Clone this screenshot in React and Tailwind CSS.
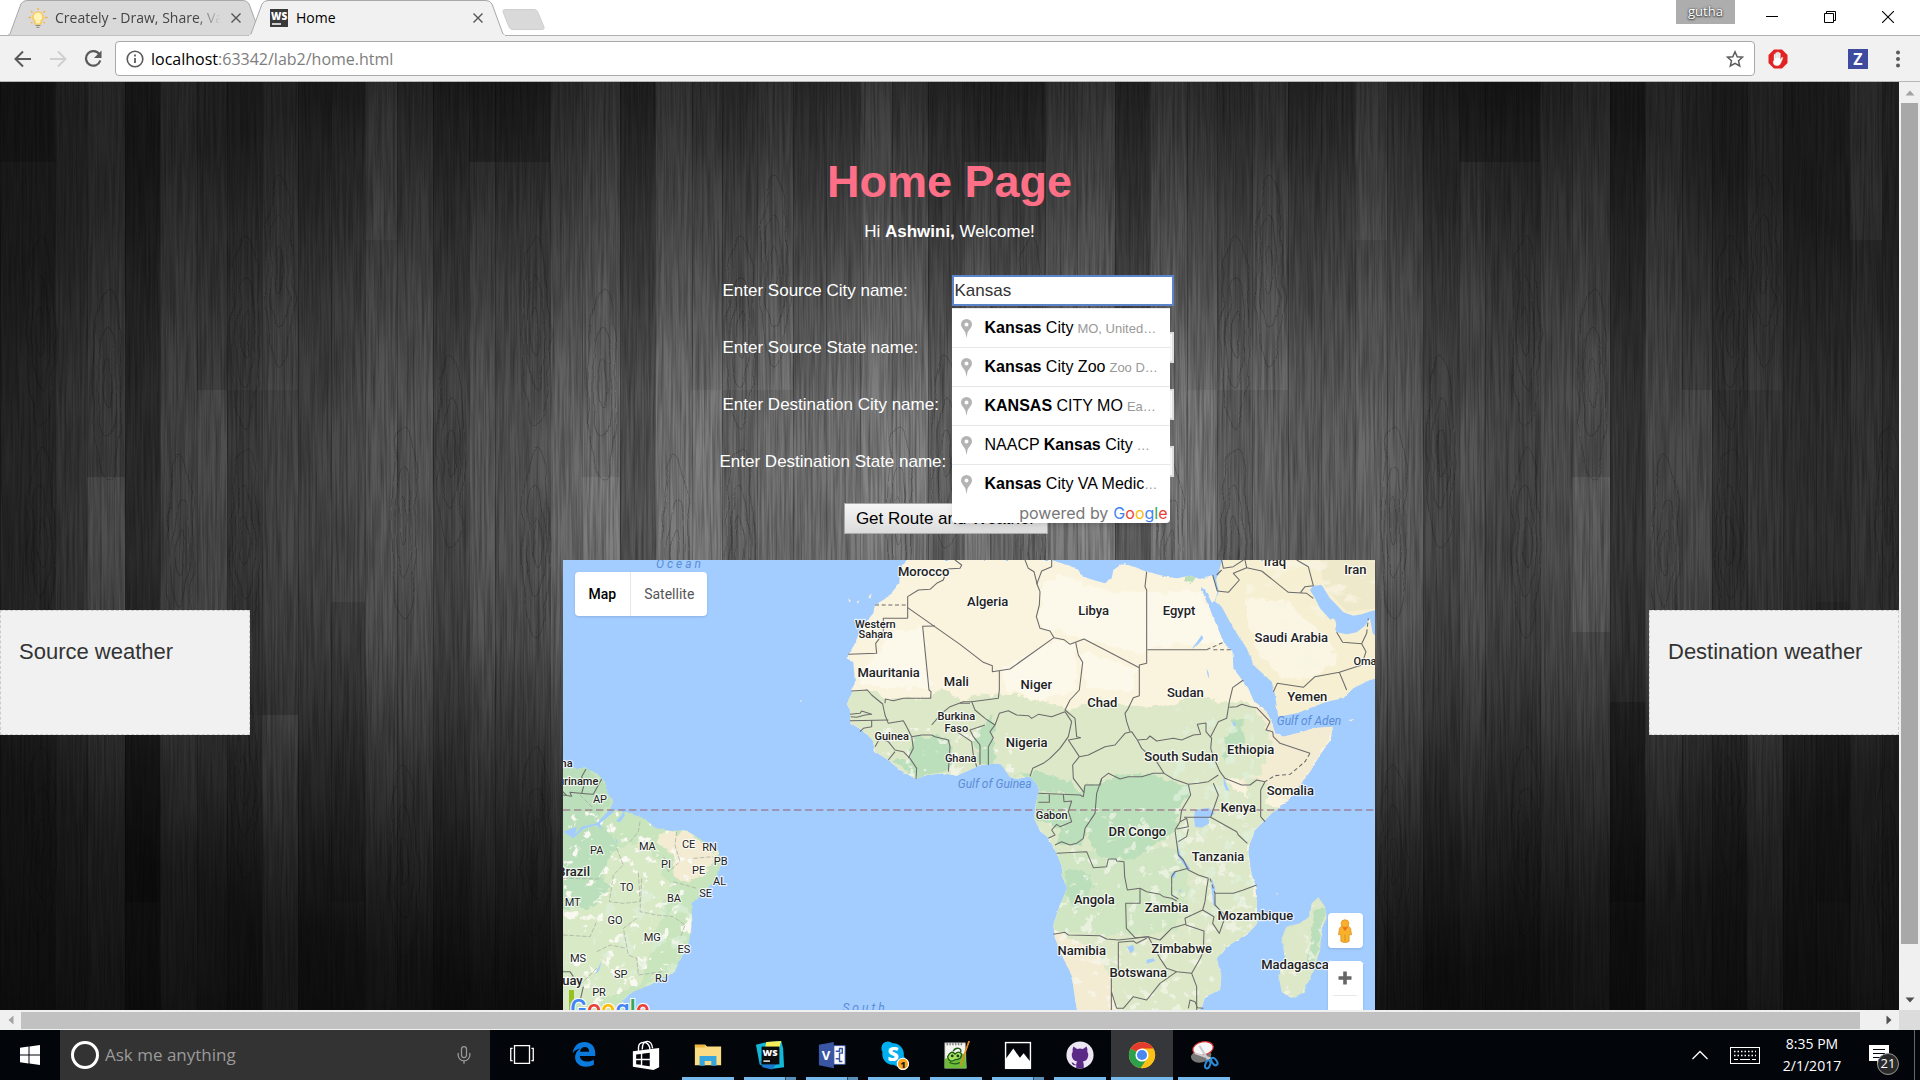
import React from "react";
import { Mic } from "lucide-react";

const ui = "font-['Open_Sans','Noto_Sans',sans-serif]";

/* ---------- wooden wall behind the page ---------- */

const planks = [
  [0, 55, "#000", 0.12], [55, 32, "#fff", 0.02], [87, 38, "#fff", 0.05], [125, 35, "#000", 0.22],
  [160, 37, "#fff", 0.05], [197, 30, "#fff", 0.02], [227, 35, "#000", 0.05], [262, 36, "#fff", 0.03],
  [298, 33, "#000", 0.08], [331, 34, "#000", 0.03], [365, 32, "#fff", 0.04], [397, 36, "#fff", 0.02],
  [433, 36, "#000", 0.18], [469, 26, "#000", 0.02],
];

const plankEnds = [
  [87, 395, 38, 155, "#fff", 0.08], [197, 308, 30, 325, "#fff", 0.05], [469, 0, 26, 80, "#000", 0.25],
  [0, 0, 55, 80, "#000", 0.2], [365, 0, 32, 158, "#fff", 0.04], [227, 308, 71, 325, "#000", 0.08],
  [262, 633, 36, 300, "#fff", 0.05], [125, 620, 35, 200, "#000", 0.2], [331, 520, 34, 300, "#000", 0.12],
];

const knots = [[41, 460], [41, 250], [245, 250], [245, 460], [404, 440], [180, 470], [280, 190], [450, 370], [107, 300], [245, 700], [41, 760], [404, 780]];

function WoodWall() {
  return (
    <svg className="absolute inset-0 h-full w-full" preserveAspectRatio="none" aria-hidden="true">
      <defs>
        <radialGradient id="glow" cx="50%" cy="47%" r="56%">
          <stop offset="0" stopColor="#888888" />
          <stop offset="0.25" stopColor="#7a7a7a" />
          <stop offset="0.5" stopColor="#5a5a5a" />
          <stop offset="0.75" stopColor="#3c3c3c" />
          <stop offset="1" stopColor="#222222" />
        </radialGradient>
        <linearGradient id="floor" x1="0" y1="0" x2="0" y2="1">
          <stop offset="0" stopColor="#000" stopOpacity="0.1" />
          <stop offset="0.35" stopColor="#000" stopOpacity="0" />
          <stop offset="0.6" stopColor="#000" stopOpacity="0.05" />
          <stop offset="1" stopColor="#000" stopOpacity="0.52" />
        </linearGradient>
        <filter id="grain" x="0" y="0" width="100%" height="100%">
          <feTurbulence type="fractalNoise" baseFrequency="0.45 0.012" numOctaves="3" seed="7" />
          <feColorMatrix values="0 0 0 0 0  0 0 0 0 0  0 0 0 0 0  1.7 0 0 0 -0.55" />
        </filter>
        <filter id="wavy" x="-20%" y="-5%" width="140%" height="110%">
          <feTurbulence type="fractalNoise" baseFrequency="0.03" numOctaves="2" seed="3" />
          <feDisplacementMap in="SourceGraphic" scale="12" />
        </filter>
        <pattern id="planks" width="495" height="930" patternUnits="userSpaceOnUse">
          {planks.map(([x, w, c, o]) => (
            <g key={x}>
              <rect x={x} width={w} height="930" fill={c} fillOpacity={o} />
              <rect x={x} width="1" height="930" fill="#000" fillOpacity="0.22" />
            </g>
          ))}
          {plankEnds.map(([x, y, w, h, c, o]) => (
            <rect key={`${x}-${y}`} x={x} y={y} width={w} height={h} fill={c} fillOpacity={o} />
          ))}
          <g fill="none" stroke="#000" strokeOpacity="0.22" filter="url(#wavy)">
            {knots.map(([x, y]) => (
              <g key={`${x}-${y}`}>
                <ellipse cx={x} cy={y} rx="4" ry="24" />
                <ellipse cx={x} cy={y} rx="9" ry="56" />
                <ellipse cx={x} cy={y} rx="14" ry="96" />
              </g>
            ))}
          </g>
        </pattern>
      </defs>
      <rect width="100%" height="100%" fill="url(#glow)" />
      <rect width="100%" height="100%" fill="url(#planks)" />
      <rect width="100%" height="100%" filter="url(#grain)" opacity="0.36" />
      <rect width="100%" height="100%" fill="url(#floor)" />
    </svg>
  );
}

/* ---------- map ---------- */

const africa =
  "M-160,15 L-180,45 -182,85 -215,125 -255,150 -260,175 -295,215 -315,265 -335,300 -337,310 -320,322 -318,345 -315,380 -325,415 -340,447 -330,465 -330,480 -328,505 -295,525 -262,555 -255,590 -215,615 -180,645 -132,672 -100,660 -50,655 -10,662 50,635 60,630 120,625 150,665 170,672 210,664 225,680 237,700 235,715 228,745 222,790 240,825 265,850 290,895 308,940 305,960 322,1000 300,1050 280,1110 285,1150 310,1210 335,1260 345,1330 352,1370 722,1370 735,1325 780,1305 784,1260 770,1210 800,1175 870,1130 892,1105 890,1000 875,960 865,890 870,865 885,825 930,780 990,730 1050,650 1080,600 1112,555 1118,515 1060,520 1030,530 970,545 945,535 935,500 920,470 880,435 865,400 820,340 818,290 790,260 765,200 740,140 722,95 735,105 757,145 768,130 772,110 758,60 720,72 690,62 650,70 620,65 560,50 520,35 490,24 460,45 455,70 435,85 400,75 370,65 350,40 290,20 275,15 Z";
const arabia =
  "M785,15 L780,40 770,80 776,110 765,140 785,155 820,220 860,280 880,330 935,380 945,420 950,455 955,485 1010,475 1100,440 1150,430 1180,400 1230,375 1250,370 1250,15 Z";
const gulf =
  "M1050,105 L1060,92 1085,90 1110,130 1130,150 1150,172 1180,182 1205,178 1235,168 1250,165 1250,245 1238,235 1230,190 1215,212 1190,232 1160,238 1130,232 1112,195 1080,160 1065,130 Z";
const madagascar =
  "M1075,1027 L1095,1055 1100,1090 1085,1120 1080,1190 1050,1270 1030,1315 995,1328 965,1310 955,1260 975,1210 965,1150 980,1115 1020,1105 1050,1080 1055,1045 Z";
const brazil =
  "M5,640 L75,640 110,655 135,680 140,710 160,740 150,762 190,770 240,785 262,797 285,818 330,828 375,825 410,845 440,870 475,885 482,930 470,975 430,1010 410,1035 395,1045 395,1110 385,1170 355,1225 345,1250 270,1290 220,1310 190,1335 190,1370 5,1370 Z";

const sahel =
  "M-345,412 L-270,405 -232,430 -90,430 -60,400 0,435 100,415 160,420 240,440 330,465 420,430 500,450 560,455 640,445 720,415 790,450 830,440 880,450 940,560 900,660 800,680 880,740 960,760 860,880 900,1100 780,1320 730,1370 470,1370 450,1260 400,1180 270,1120 200,700 -350,680 Z";

const jungle = [
  "M410,690 L470,660 560,655 640,680 690,700 665,760 640,830 600,860 520,910 450,915 400,880 380,830 360,870 290,870 300,820 225,790 230,720 370,715 375,690 Z",
  "M-140,545 L-60,545 -30,560 -20,640 -130,670 -200,620 -150,600 Z",
  "M40,540 L100,480 105,620 160,660 230,650 330,680 360,715 240,712 200,668 60,630 Z",
  "M820,490 L850,500 850,560 810,600 780,620 Z",
  "M325,940 L390,960 400,1010 340,1060 310,1000 Z",
  "M1065,1060 L1095,1060 1075,1190 1040,1260 1050,1160 Z",
  "M680,60 L710,58 706,80 690,85 668,70 Z",
];

const amazon = "M5,640 L75,640 135,680 155,740 110,800 150,830 170,880 120,960 150,1000 90,1060 5,1060 Z";
const caatinga = "M300,835 L375,825 430,865 475,890 450,930 430,960 380,985 340,960 345,900 290,865 Z";

const desert = [
  "M-200,230 L-110,215 -90,400 -230,400 -310,380 Z",
  "M240,90 L300,60 440,110 560,110 560,300 380,255 240,210 Z",
  "M130,340 L280,255 350,270 350,400 240,440 130,400 Z",
  "M560,110 L720,110 800,260 560,280 Z",
  "M850,130 L1000,150 1100,260 1130,340 1050,380 960,370 900,300 Z",
  "M360,290 L530,340 520,410 380,400 Z",
];

const borders = [
  "M0,15 M195,15 L205,40 222,50 232,90 240,110 238,150 229,185 240,220 270,228 282,248",
  "M275,15 L275,35 245,48 230,88",
  "M282,248 L150,342 97,350 97,332 70,322 0,268 -157,158",
  "M282,248 L312,254 330,268 372,252 538,338",
  "M-157,190 L-157,125 -125,105 -90,103 -70,85 -50,75 -45,60 M-15,15 L5,30 0,40 -40,42",
  "M-157,190 L-230,190 -230,235 -253,265 -250,295 -335,298",
  "M-75,213 L-112,214 -93,405 -87,410 -88,430 -170,430 -200,437 -224,432 -225,445",
  "M-325,408 L-278,405 -265,420 -232,447 -225,480 -215,505 -170,497 -160,515 -145,545",
  "M-330,497 L-215,495 M-330,478 L-300,475 -295,468 -265,478 -285,480 -310,487 -328,485",
  "M-265,495 L-265,515 -290,520 -300,530 M-255,575 L-240,550 -215,560 -195,585 -170,590 -150,610 -130,640 -132,672 M-215,615 L-195,590",
  "M-145,545 L-115,540 -85,540 -75,545 -35,555 -30,575 -35,650 M-145,545 L-140,580 -155,610",
  "M-85,510 L-55,475 -30,455 10,440 35,440 115,430 118,405 118,348",
  "M35,440 L45,465 75,490 105,510 90,530 100,548 85,575 85,630",
  "M0,445 L30,445 M60,630 L60,570 40,545 30,525 75,510 M50,635 L40,600 35,560 -10,530",
  "M105,510 L118,475 145,467 170,480 205,482 215,490 235,478 275,485 315,470",
  "M347,262 L355,300 368,322 358,405 330,435 315,465 345,490 350,545 362,548",
  "M315,470 L335,500 325,545 300,580 270,610 250,625 218,640 210,664",
  "M362,548 L325,555 358,605 338,630 340,670 372,712 370,725 360,720 235,715",
  "M358,605 L385,600 435,575 465,570 495,535 515,530 532,555",
  "M560,50 L555,95 560,105 560,325 538,330 538,422 520,428 505,460 495,475 500,500 510,530",
  "M562,284 L740,284",
  "M532,555 L560,553 570,543 590,558 640,550 665,555 700,540 722,538 712,508 738,504 738,530 755,550 752,580",
  "M532,555 L545,580 590,620 612,655 580,655 545,665 505,665 480,672 445,655 425,670 420,690 375,690 372,712",
  "M612,655 L640,672 685,688 715,685 745,680 775,660",
  "M752,545 L775,500 800,490 808,440 818,398 850,375",
  "M808,457 L830,455 845,448 870,455 890,458 930,500 M930,500 L918,525 938,530 M938,530 L940,545 960,565 1050,595",
  "M752,580 L762,610 780,650 795,670 845,690 870,690 890,675 915,680",
  "M915,680 L902,705 902,785 915,800",
  "M752,787 L830,830 835,840 862,865 M672,787 L752,787 775,720 760,685",
  "M685,688 L692,720 665,765 660,800 645,825 655,900 670,915 685,945 715,960 745,970",
  "M660,800 L680,790 685,815 650,822 M685,822 L680,845 655,860",
  "M425,670 L410,715 405,775 375,820 370,850 350,865 330,870 305,860 285,870",
  "M310,718 L312,740 335,738 325,770 335,800 300,815 290,808 275,825 285,840 265,850 M235,742 L268,742 268,718",
  "M290,895 L380,890 400,938 440,935 445,912 468,912 470,918 492,920 494,965 502,1005 540,1000",
  "M540,1000 L540,1045 497,1045 499,1120 525,1148 565,1145 M540,1000 L560,1010 600,1018 610,1025 635,1030 650,1038",
  "M685,940 L645,950 635,965 635,1020 655,1032",
  "M745,970 L740,1000 735,1040 728,1065 675,1090 678,1110 732,1128 730,1190 718,1215 695,1255",
  "M728,1065 L762,1085 758,1105 778,1135 792,1095 790,1075 765,1050 765,1015 820,1015 850,1005 890,990",
  "M280,1138 L315,1132 325,1140 420,1142 440,1152 475,1155 565,1145 600,1155 635,1120 678,1107",
  "M475,1162 L520,1158 530,1165 560,1150 M475,1162 L475,1255 M565,1145 L600,1210 620,1240 650,1250 695,1255 710,1295 710,1365",
  "M454,1255 L454,1365 M454,1310 L470,1360 490,1360 520,1325 560,1335 600,1285 650,1250 M685,1360 L690,1335 705,1340 712,1358 730,1360",
  "M785,15 L790,40 820,35 850,15 M855,15 L860,38 820,55 838,75 805,112 772,108",
  "M860,38 L905,48 985,112 1040,115 1060,130 M1010,15 L1045,35 1060,92 1035,95 1022,112",
  "M940,410 L952,385 1030,397 1065,365 1138,352 1160,405 M1138,352 L1205,330",
  "M1130,232 L1148,262 1205,266 1218,290 1205,330 M1205,266 L1220,235",
  "M770,60 L785,45 M758,60 L772,108",
];

const countries = [
  [83, 153, "Algeria"], [401, 180, "Libya"], [657, 180, "Egypt"], [994, 262, "Saudi Arabia"], [1186, 56, "Iran"],
  [-109, 62, "Morocco"], [-214, 367, "Mauritania"], [-11, 393, "Mali"], [229, 403, "Niger"], [427, 457, "Chad"],
  [676, 427, "Sudan"], [1042, 438, "Yemen"], [200, 575, "Nigeria"], [872, 597, "Ethiopia"], [664, 618, "South Sudan"],
  [991, 720, "Somalia"], [835, 770, "Kenya"], [532, 842, "DR Congo"], [774, 918, "Tanzania"], [403, 1046, "Angola"],
  [620, 1071, "Zambia"], [886, 1095, "Mozambique"], [365, 1200, "Namibia"], [665, 1194, "Zimbabwe"],
  [535, 1266, "Botswana"], [1012, 1242, "Madagascar"], [945, 32, "Iraq"],
];

const smallCountries = [
  [-254, 219, "Western"], [-253, 250, "Sahara"], [-11, 496, "Burkina"], [-11, 530, "Faso"], [-205, 554, "Guinea"],
  [2, 620, "Ghana"], [275, 792, "Gabon"], [1224, 329, "Oman"],
];

const states = [
  [120, 745, "AP"], [110, 897, "PA"], [262, 884, "MA"], [386, 880, "CE"], [449, 889, "RN"], [482, 929, "PB"],
  [318, 940, "PI"], [416, 957, "PE"], [479, 989, "AL"], [437, 1027, "SE"], [200, 1009, "TO"], [342, 1042, "BA"],
  [38, 1053, "MT"], [165, 1107, "GO"], [277, 1158, "MG"], [372, 1195, "ES"], [54, 1221, "MS"], [182, 1268, "SP"],
  [304, 1281, "RJ"], [117, 1323, "PR"],
];

const googleLetters = [["G", "#4285f4"], ["o", "#ea4335"], ["o", "#fbbc05"], ["g", "#4285f4"], ["l", "#34a853"], ["e", "#ea4335"]];

const halo = { stroke: "#ffffff", strokeWidth: 7, strokeOpacity: 0.75, paintOrder: "stroke", strokeLinejoin: "round" };

function WorldMap() {
  return (
    <svg
      className="block h-full w-full font-[Roboto,sans-serif]"
      viewBox="9 15 2436 1350"
      preserveAspectRatio="xMidYMin slice"
      role="img"
      aria-label="Map of Africa and the South Atlantic"
    >
      <defs>
        <clipPath id="africaClip">
          <path d={africa} />
          <path d={madagascar} />
        </clipPath>
        <clipPath id="brazilClip">
          <path d={brazil} />
        </clipPath>
        <filter id="rough" x="-5%" y="-5%" width="110%" height="110%">
          <feTurbulence type="fractalNoise" baseFrequency="0.035" numOctaves="3" seed="5" />
          <feDisplacementMap in="SourceGraphic" scale="34" xChannelSelector="R" yChannelSelector="G" />
        </filter>
        <filter id="coast" x="-2%" y="-2%" width="104%" height="104%">
          <feTurbulence type="fractalNoise" baseFrequency="0.06" numOctaves="2" seed="9" />
          <feDisplacementMap in="SourceGraphic" scale="9" xChannelSelector="R" yChannelSelector="G" />
        </filter>
        <filter id="speckle" x="0" y="0" width="100%" height="100%">
          <feTurbulence type="fractalNoise" baseFrequency="0.03" numOctaves="4" seed="12" />
          <feColorMatrix values="0 0 0 0 0.95  0 0 0 0 0.94  0 0 0 0 0.88  14 0 0 0 -8.8" />
        </filter>
        <filter id="moss" x="0" y="0" width="100%" height="100%">
          <feTurbulence type="fractalNoise" baseFrequency="0.022" numOctaves="4" seed="31" />
          <feColorMatrix values="0 0 0 0 0.74  0 0 0 0 0.88  0 0 0 0 0.72  10 0 0 0 -5.8" />
        </filter>
        <filter id="sand" x="0" y="0" width="100%" height="100%">
          <feTurbulence type="fractalNoise" baseFrequency="0.012 0.02" numOctaves="4" seed="21" />
          <feColorMatrix values="0 0 0 0 0.95  0 0 0 0 0.91  0 0 0 0 0.77  9 0 0 0 -5" />
        </filter>
      </defs>
      <rect x="-400" width="3400" height="2400" fill="#a3ccff" />

      <g transform="translate(1200 0)">
        <g filter="url(#coast)">
          <path d={africa} fill="#faf3dd" />
          <path d={madagascar} fill="#dde8c8" />
          <path d={arabia} fill="#f6efd2" />
        </g>
        <g clipPath="url(#africaClip)">
          <path d="M750,440 L1130,500 1000,740 860,700 780,600 Z M280,1140 L460,1150 460,1370 340,1370 Z" fill="#f3ebd2" filter="url(#rough)" />
          <path d={sahel} fill="#dde8c8" filter="url(#rough)" />
          <path d="M280,890 L660,880 690,1000 640,1130 460,1140 270,1130 Z" fill="#d0e6c2" filter="url(#rough)" />
          <path d="M860,660 L930,690 890,830 860,720 Z" fill="#dde8c8" filter="url(#rough)" />
          {jungle.map((d) => (
            <path key={d} d={d} fill="#bbdfba" filter="url(#rough)" />
          ))}
          <rect x="200" y="760" width="720" height="620" filter="url(#speckle)" opacity="0.6" />
          <rect x="-340" y="520" width="500" height="160" filter="url(#speckle)" opacity="0.7" />
          <rect x="640" y="460" width="240" height="640" filter="url(#moss)" opacity="0.7" />
          {desert.map((d) => (
            <path key={d} d={d} fill="#fcf8ea" filter="url(#rough)" />
          ))}
          <rect x="930" y="1000" width="180" height="340" filter="url(#speckle)" opacity="0.6" />
        </g>
        <path d="M850,130 L980,140 1100,250 1130,320 1050,370 960,370 900,300 Z" fill="#fbf6e4" filter="url(#rough)" />
        <path d="M1080,15 L1250,15 1250,160 1160,170 1090,90 Z" fill="#efe9cb" />
        <rect x="860" y="20" width="385" height="140" filter="url(#sand)" opacity="0.8" />
        <rect x="960" y="160" width="130" height="200" filter="url(#sand)" opacity="0.5" />
        <path d={gulf} fill="#a3ccff" />
        <path d="M1110,195 q12,-12 18,8 q2,20 -8,22 q-12,-8 -10,-30z" fill="#f6efd2" />
        <g fill="#a3ccff">
          <path d="M705,765 L745,758 765,775 745,790 748,805 725,818 705,815 702,790 Z" />
          <path d="M648,835 L655,880 662,900 690,940 684,948 655,905 Z" />
          <path d="M755,970 L766,1000 762,1020 770,1055 760,1050 754,1000 Z" />
          <path d="M790,665 L800,690 808,708 798,705 792,690 Z" />
          <path d="M725,240 L730,250 715,268 695,282 715,255 Z" />
          <path d="M500,1175 L520,1170 523,1185 512,1195 Z M560,1215 l20,-5 5,8 -25,8z" />
          <path d="M740,340 l6,15 2,18 -6,-15z M818,500 l8,2 2,10 -8,2z" />
          <path d="M635,955 l15,-5 -8,20 -8,-4z M655,1010 l10,-10 -4,12z" />
        </g>
        <g fill="none" stroke="#6b6b6b" strokeWidth="3.2" strokeLinejoin="round">
          {borders.map((d) => (
            <path key={d} d={d} />
          ))}
          <path d="M-255,150 L-157,150 M740,284 L790,262 M760,284 L818,284 M1050,595 L1035,620 990,658 945,662 915,680 M750,970 L760,1000 765,1015 M1220,235 L1225,190" strokeDasharray="12 8" />
        </g>
        <path d="M1165,495 l18,-3 -10,7z M1200,1222 l14,3 -10,3z M950,1012 l4,6 -4,2z M-335,130 l8,8 -6,4z M-310,140 l8,-4 -4,10z M-275,125 l10,-10 -4,18z M-480,435 l6,3 -4,4z" fill="#f7f0dc" />
      </g>

      <path d={brazil} fill="#c9e5bd" filter="url(#coast)" />
      <g clipPath="url(#brazilClip)">
        <path d="M150,880 L260,850 330,1000 300,1100 240,1290 5,1370 5,1060 120,1020 Z" fill="#d8e9c6" filter="url(#rough)" />
        <path d={amazon} fill="#bbdfba" filter="url(#rough)" />
        <path d={caatinga} fill="#f3ebd2" filter="url(#rough)" />
        <rect x="5" y="770" width="390" height="600" filter="url(#speckle)" />
        <rect x="100" y="1000" width="300" height="370" filter="url(#moss)" opacity="0.6" />
        <path d="M9,830 L50,815 45,840 65,815 110,805 150,762 162,770 120,805 125,822 108,810 70,822 40,850 Z M165,845 l8,15 -2,8z" fill="#a3ccff" />
        <path d="M190,770 l5,10 -15,22 -12,-5 15,-15z M105,1258 l20,-40 -8,30z" fill="#a3ccff" />
      </g>
      <g fill="none" stroke="#6b6b6b" strokeWidth="3.2" strokeLinejoin="round">
        <path d="M78,642 L65,665 72,690 65,715 M125,672 L100,718 75,716 30,712 35,724 9,720 M9,710 L20,722 M9,1250 L30,1250 40,1265 M70,1295 L62,1330" />
      </g>
      <g fill="none" stroke="#a9b3a2" strokeWidth="2.4" strokeDasharray="14 5">
        <path d="M240,800 L235,830 210,860 M350,830 L345,870 360,920 325,950 310,900 M400,910 L460,905 M170,880 L190,930 160,960 148,1040 L190,1045 240,1040 235,950 M245,970 L240,1070 290,1080 340,1085 375,1110 360,1150 M60,720 L100,760 M9,1140 L90,1145 110,1100 M110,1190 L150,1170 200,1180 M230,1090 L190,1120 205,1200 230,1210 235,1260 310,1250 M60,1290 L110,1240 M9,970 L120,972 M340,980 L410,1000" />
      </g>

      <path d="M9,765 H2445" stroke="#9a6f86" strokeOpacity="0.8" strokeWidth="5" strokeDasharray="22 11" />

      <g fill="#222222" textAnchor="middle">
        <g transform="translate(1200 0)" fontWeight="500" {...halo}>
          {countries.map(([x, y, t]) => (
            <text key={t} x={x} y={y} fontSize="39">{t}</text>
          ))}
          {smallCountries.map(([x, y, t]) => (
            <text key={t} x={x} y={y} fontSize="33">{t}</text>
          ))}
        </g>
        <g fontSize="33" {...halo}>
          {states.map(([x, y, t]) => (
            <text key={t} x={x} y={y}>{t}</text>
          ))}
        </g>
        <g textAnchor="end" fontWeight="500" {...halo}>
          <text x="90" y="962" fontSize="39">Brazil</text>
          <text x="68" y="1290" fontSize="39">Paraguay</text>
          <text x="115" y="689" fontSize="33">Suriname</text>
          <text x="38" y="637" fontSize="33">Guyana</text>
        </g>
      </g>
      <g fill="#5c8ed6" fontStyle="italic" fontSize="36" textAnchor="middle">
        <text x="2247" y="510">Gulf of Aden</text>
        <text x="1304" y="698">Gulf of Guinea</text>
        <text x="360" y="38" className="tracking-[9px]">Ocean</text>
        <text x="915" y="1371" className="tracking-[9px]">South</text>
      </g>
      <rect x="27" y="1305" width="15" height="70" fill="#97c11f" />
      <text x="30" y="1390" fontSize="75" fontWeight="500" stroke="#ffffff" strokeWidth="6" paintOrder="stroke">
        {googleLetters.map(([ch, c], i) => (
          <tspan key={i} fill={c}>{ch}</tspan>
        ))}
      </text>
    </svg>
  );
}

function MapPanel() {
  return (
    <div className="relative h-full w-[812px] overflow-hidden bg-[#a3ccff] font-[Roboto,sans-serif]">
      <WorldMap />
      <div className="absolute top-3 left-3 flex h-11 rounded-sm bg-white text-sm shadow">
        <button type="button" className="border-r border-gray-200 px-[14px] font-medium text-black">Map</button>
        <button type="button" className="px-[13px] text-[#565656]">Satellite</button>
      </div>
      <div className="absolute right-3 bottom-0 flex flex-col gap-[13px]">
        <button type="button" aria-label="Street View" className="flex h-[35px] w-[35px] items-center justify-center rounded-sm bg-white shadow">
          <svg viewBox="0 0 16 26" className="h-6 w-4" aria-hidden="true">
            <path d="M2 10 q1-2 3-2 h6 q2 0 3 2 l1 7 h-2.500 v7 q-2 1.500-4.500 1.500 t-4.500-1.500 v-7 H1z" fill="#f9b12c" stroke="#d98d1c" strokeWidth="0.8" />
            <circle cx="8" cy="5" r="4.200" fill="#f9b12c" stroke="#d98d1c" strokeWidth="0.8" />
            <path d="M5 9 L8 13 11 9z" fill="#e8711a" />
            <path d="M8 17v7" stroke="#d98d1c" />
          </svg>
        </button>
        <div className="flex h-[49px] flex-col items-center rounded-t-sm bg-white shadow">
          <button type="button" aria-label="Zoom in" className="flex h-[34px] w-full items-center justify-center">
            <svg viewBox="0 0 14 14" className="h-[14px] w-[14px]" aria-hidden="true">
              <path d="M7 0.500v13M0.500 7h13" stroke="#666" strokeWidth="3.600" />
            </svg>
          </button>
          <span className="h-px w-6 bg-gray-200" />
        </div>
      </div>
    </div>
  );
}

/* ---------- page ---------- */

const suggestions = [
  ["", "Kansas", " City", "MO, United…"],
  ["", "Kansas", " City Zoo", "Zoo D…"],
  ["", "KANSAS", " CITY MO", "Ea…"],
  ["NAACP ", "Kansas", " City", "…"],
  ["", "Kansas", " City VA Medic", "…"],
];

function Suggestions() {
  return (
    <div className="absolute top-[33px] left-0 z-10 w-[218px] rounded-b-sm bg-white shadow-md">
      <ul role="listbox" aria-label="City suggestions">
        {suggestions.map(([pre, hit, post, area], i) => (
          <li
            key={i}
            role="option"
            aria-selected="false"
            className="flex h-[39px] items-center gap-[13px] overflow-hidden border-t border-gray-200 pl-[9px] whitespace-nowrap"
          >
            <svg viewBox="0 0 11 19" className="h-[19px] w-[11px] shrink-0" aria-hidden="true">
              <path fillRule="evenodd" d="M5.500 0a5.500 5.500 0 0 1 5.500 5.500c0 3-3 5-4.400 8L5.500 19l-1.100-5.500C3 10.500 0 8.500 0 5.500A5.500 5.500 0 0 1 5.500 0zm0 3.500a2 2 0 1 0 0 4 2 2 0 0 0 0-4z" fill="#b3b3b3" />
            </svg>
            <span className="text-[16px] text-black">
              {pre}
              <b>{hit}</b>
              {post}
              <span className={area === "…" && i === 4 ? "text-[13px] text-[#999]" : "pl-1 text-[13px] text-[#999]"}>{area}</span>
            </span>
          </li>
        ))}
      </ul>
      <div className="flex h-5 items-center justify-end gap-[5px] pr-[2px] font-[Inter,sans-serif] text-[16px] text-[#777]">
        powered by
        <span>
          {googleLetters.map(([ch, c], i) => (
            <span key={i} style={{ color: c }}>{ch}</span>
          ))}
        </span>
      </div>
    </div>
  );
}

const fields = [
  ["sourceCity", "Enter Source City name:", "Kansas"],
  ["sourceState", "Enter Source State name:", ""],
  ["destinationCity", "Enter Destination City name:", ""],
  ["destinationState", "Enter Destination State name:", ""],
];

function RouteForm() {
  return (
    <form className="mt-[31px] flex flex-col items-center gap-[26px] pr-2 text-[17px]" onSubmit={(e) => e.preventDefault()}>
      {fields.map(([id, label, value], i) => (
        <div key={id} className="flex items-center">
          <label htmlFor={id} className={i === 3 ? "w-[234px] pl-[2px] text-white" : "w-[234px] pl-[5px] text-white"}>{label}</label>
          <div className="relative">
            <input
              id={id}
              type="text"
              defaultValue={value}
              className={
                i === 0
                  ? "block h-[31px] w-[222px] border-2 border-[#5b83c9] bg-white px-px text-[#333] outline-none"
                  : "block h-[31px] w-[222px] border-2 border-[#e0e0e0] bg-white px-px text-[#333]"
              }
            />
            {i === 0 && <Suggestions />}
          </div>
        </div>
      ))}
      <button type="submit" className="h-[31px] w-[204px] border border-[#a9a9a9] bg-linear-to-b from-[#f6f6f6] to-[#dcdcdc] text-black">
        Get Route and Weather
      </button>
    </form>
  );
}

function WeatherCard({ title }) {
  return (
    <section className="mt-[50px] h-[125px] w-[250px] shrink-0 border border-dashed border-[#ccc] bg-[#f1f1f1] px-[18px] pt-[26px]">
      <h3 className="text-[22px] leading-[30px] text-[#333]">{title}</h3>
    </section>
  );
}

function Page() {
  return (
    <main className="relative flex min-w-0 flex-1 flex-col overflow-hidden bg-[#1c1c1c] font-['Liberation_Sans',Arial,sans-serif]">
      <WoodWall />
      <div className="relative z-10 pt-[73px] text-center">
        <h1 className="text-[45px] leading-[54px] font-bold text-[#ff6f87]">Home Page</h1>
        <p className="mt-[11px] text-[17px] leading-6 text-white">
          Hi <b>Ashwini,</b> Welcome!
        </p>
        <div className="text-left">
          <RouteForm />
        </div>
      </div>
      <div className="relative mt-[26px] flex min-h-0 flex-1 items-start">
        <WeatherCard title="Source weather" />
        <div className="flex h-full min-w-0 flex-1 justify-center pl-[38px]">
          <MapPanel />
        </div>
        <WeatherCard title="Destination weather" />
      </div>
    </main>
  );
}

/* ---------- browser window ---------- */

function TabShape({ fill, flat }) {
  return (
    <svg viewBox="0 0 258 36" preserveAspectRatio="none" className="absolute inset-0 h-full w-full" aria-hidden="true">
      <path d="M0 36 L3 34 14 4 Q16 0.500 20 0.500 H238 Q242 0.500 244 4 L255 34 258 36z" fill={fill} stroke="#a8a8a8" />
      {flat && <path d="M1 35.500H257" stroke={fill} strokeWidth="2" />}
    </svg>
  );
}

function CloseX({ className }) {
  return (
    <svg viewBox="0 0 10 10" className={className} aria-hidden="true">
      <path d="M0.500 0.500l9 9M9.500 0.500l-9 9" stroke="#555" strokeWidth="1.400" />
    </svg>
  );
}

function WebStormMark() {
  return (
    <svg viewBox="0 0 18 18" className="h-[18px] w-[18px]" aria-hidden="true">
      <rect width="18" height="18" fill="#3a3a3a" />
      <text x="1" y="11" fontSize="10" fontWeight="800" fill="#fff">WS</text>
      <path d="M2 15h9" stroke="#fff" strokeWidth="1.500" />
    </svg>
  );
}

function TabStrip() {
  return (
    <div className="flex h-9 items-start border-b border-[#b0b0b0] bg-white">
      <div className="flex h-9 pl-[7px]">
        <div className="relative flex h-9 w-[256px] items-center pl-[21px]">
          <TabShape fill="#d9d9d9" />
          <svg viewBox="0 0 20 20" className="relative h-5 w-5" aria-hidden="true">
            <path d="M10 4a5 5 0 0 0-3 9v3h6v-3a5 5 0 0 0-3-9z" fill="#fff3b8" stroke="#fbc43d" strokeWidth="1.200" />
            <path d="M7.500 17.500h5M8.500 19.300h3" stroke="#888" />
            <path d="M10 0v2M3 3l1.500 1.500M17 3l-1.500 1.500M0.500 9.500h2.500M17 9.500h2.500M3 15l1.500-1M17 15l-1.500-1" stroke="#fbb03b" strokeWidth="1.400" />
          </svg>
          <span className="relative ml-[7px] w-[166px] overflow-hidden text-sm whitespace-nowrap text-[#444] [mask-image:linear-gradient(to_right,black_85%,transparent)]">
            Creately - Draw, Share, Validate
          </span>
          <button type="button" aria-label="Close Creately tab" className="relative ml-[10px]">
            <CloseX className="h-[10px] w-[10px]" />
          </button>
        </div>
        <div className="relative z-10 -ml-[15px] flex h-9 w-[258px] items-center pr-[23px] pl-[22px]">
          <TabShape fill="#f1f1f1" flat />
          <span className={`relative ${ui}`}><WebStormMark /></span>
          <span className="relative ml-2 flex-1 text-sm text-black">Home</span>
          <button type="button" aria-label="Close Home tab" className="relative">
            <CloseX className="h-[10px] w-[10px]" />
          </button>
        </div>
      </div>
      <button type="button" aria-label="New tab" className="mt-[9px] -ml-1">
        <svg viewBox="0 0 43 21" className="h-[21px] w-[43px]" aria-hidden="true">
          <path d="M3 0.500H32q3 0 4 3L42 18q1 2.500-2 2.500H11q-3 0-4-2.500L1 3Q0.500 0.500 3 0.500z" fill="#d9d9d9" stroke="#cfcfcf" />
        </svg>
      </button>
      <div className="ml-auto flex items-start">
        <span className="mr-[31px] flex h-6 w-[59px] items-center justify-center bg-[#adadad] text-[13px] text-white [text-shadow:0_0_2px_#333,0_1px_2px_#333]">gutha</span>
        <div className="flex h-[34px] items-center gap-[46px] pr-[26px]">
          <button type="button" aria-label="Minimize">
            <svg viewBox="0 0 12 12" className="h-3 w-3" aria-hidden="true"><path d="M0 5.500h12" stroke="#000" /></svg>
          </button>
          <button type="button" aria-label="Restore">
            <svg viewBox="0 0 12 12" className="h-3 w-3" aria-hidden="true"><path d="M0.500 2.500h9v9h-9zM2.500 2.500v-2h9v9h-2" fill="none" stroke="#000" /></svg>
          </button>
          <button type="button" aria-label="Close window">
            <svg viewBox="0 0 12 12" className="h-3 w-3" aria-hidden="true"><path d="M0 0l12 12M12 0L0 12" stroke="#000" strokeWidth="1.100" /></svg>
          </button>
        </div>
      </div>
    </div>
  );
}

function Toolbar() {
  return (
    <div className="flex h-[46px] items-center border-b border-[#b6b6b6] bg-[#f1f1f1] pl-[14px]">
      <button type="button" aria-label="Back">
        <svg viewBox="0 0 18 18" className="h-[18px] w-[18px]" aria-hidden="true"><path d="M17 9H2M9 1.500L1.500 9 9 16.500" fill="none" stroke="#5a5a5a" strokeWidth="2" /></svg>
      </button>
      <button type="button" aria-label="Forward" className="ml-[17px]">
        <svg viewBox="0 0 18 18" className="h-[18px] w-[18px]" aria-hidden="true"><path d="M1 9h15M9 1.500L16.500 9 9 16.500" fill="none" stroke="#cfcfcf" strokeWidth="2" /></svg>
      </button>
      <button type="button" aria-label="Reload" className="ml-[17px]">
        <svg viewBox="0 0 18 18" className="h-[18px] w-[18px]" aria-hidden="true">
          <path d="M15.300 4.200A7.300 7.300 0 1 0 16.300 10.500" fill="none" stroke="#5a5a5a" strokeWidth="2.200" />
          <path d="M17.500 0.500v7.500h-7.500z" fill="#5a5a5a" />
        </svg>
      </button>
      <div className="relative ml-[13px] flex h-[35px] flex-1 items-center rounded-sm border border-[#a9a9a9] bg-white px-[10px]">
        <svg viewBox="0 0 18 18" className="h-[18px] w-[18px]" aria-hidden="true">
          <circle cx="9" cy="9" r="7.800" fill="none" stroke="#5a5a5a" strokeWidth="1.600" />
          <path d="M9 8v5M9 4.500v1.900" stroke="#5a5a5a" strokeWidth="1.800" />
        </svg>
        <a href="#address" className="ml-[7px] flex-1 text-[16px] text-[#7d7d7d]">
          <span className="text-black">localhost</span>:63342/lab2/home.html
        </a>
        <button type="button" aria-label="Bookmark this page">
          <svg viewBox="0 0 18 18" className="h-[18px] w-[18px]" aria-hidden="true">
            <path d="M9 1.800l2.200 4.900 5.300.5-4 3.600 1.200 5.200L9 13.300 4.300 16l1.200-5.200-4-3.600 5.300-.5z" fill="none" stroke="#5a5a5a" strokeWidth="1.500" />
          </svg>
        </button>
      </div>
      <button type="button" aria-label="Ad blocker" className="ml-[13px]">
        <svg viewBox="0 0 20 20" className="h-5 w-5" aria-hidden="true">
          <path d="M6 0.500h8L19.500 6v8L14 19.500H6L0.500 14V6z" fill="#e32222" />
          <path d="M6 11V5.500q.8-1 1.500 0V9V4q.8-1 1.600 0v5V3.200q.9-1 1.700 0V9V4.200q.8-1 1.600 0v6.300l1.300-2q1-.8 1.300.3l-2 5q-1 3-4 3-3.800 0-4-4z" fill="#fff" stroke="#c9c9c9" strokeWidth="0.400" />
        </svg>
      </button>
      <button type="button" aria-label="Z extension" className="ml-[60px] flex h-5 w-5 items-center justify-center bg-[#3e4b9e] text-base font-bold text-white">Z</button>
      <button type="button" aria-label="Menu" className="ml-7 pr-5">
        <svg viewBox="0 0 4 18" className="h-[18px] w-1" aria-hidden="true">
          <g fill="#5a5a5a"><circle cx="2" cy="2.500" r="2" /><circle cx="2" cy="9" r="2" /><circle cx="2" cy="15.500" r="2" /></g>
        </svg>
      </button>
    </div>
  );
}

function Triangle({ d, fill }) {
  return (
    <svg viewBox="0 0 10 10" className="h-[10px] w-[10px]" aria-hidden="true"><path d={d} fill={fill} /></svg>
  );
}

function VerticalBar() {
  return (
    <div className="flex w-[21px] shrink-0 flex-col items-center bg-[#f0f0f0]">
      <div className="flex h-[21px] items-center"><Triangle d="M0.500 7.500L5 2.500 9.500 7.500z" fill="#a3a3a3" /></div>
      <div className="w-[17px] grow-[840] bg-[#a8a8a8]" />
      <div className="grow-[45]" />
      <div className="flex h-[21px] items-center"><Triangle d="M0.500 2.500L5 7.500 9.500 2.500z" fill="#505050" /></div>
    </div>
  );
}

function HorizontalBar() {
  return (
    <div className="flex h-5 shrink-0 bg-[#f0f0f0]">
      <div className="flex w-[21px] items-center justify-center"><Triangle d="M7.500 0.500L2.500 5 7.500 9.500z" fill="#a3a3a3" /></div>
      <div className="mt-[2px] mb-px grow-[1839] bg-[#c1c1c1]" />
      <div className="grow-[18]" />
      <div className="flex w-[21px] items-center justify-center"><Triangle d="M2.500 0.500L7.500 5 2.500 9.500z" fill="#505050" /></div>
      <div className="w-[21px] bg-[#dcdcdc]" />
    </div>
  );
}

/* ---------- taskbar ---------- */

const apps = [
  { name: "Task View", icon: (<g fill="none" stroke="#fff" strokeWidth="1.400"><path d="M8 6h16v19H8zM6 9H4v13h2M26 9h2v13h-2" /></g>) },
  { name: "Edge", icon: (<path d="M4 14C5 6 10 2 16.500 2 24 2 28 7.500 28 14v3H11.500c.2 4 4 6 8 6 2.700 0 5-.8 7-2v5.500c-2.500 1.300-5.300 2-8.500 2C10.500 28.500 6.500 24 6.500 18.500c0-4 2-7.500 5.500-9.500-3.800.8-6.500 2.500-8 5zM11.800 12.500h9.700c0-3-1.700-5-4.500-5s-4.900 2-5.200 5z" fill="#0a7bdc" />) },
  { name: "Store", icon: (<g><path d="M2 12L30 8.500V29L24 32 2 28.500z" fill="#fff" /><path d="M8 12V8q0-5 5-5.500T20 8v2M12 10q0-8 5-8.500T23 9" fill="none" stroke="#fff" strokeWidth="1.500" /><path d="M5.500 15.500l5-.6v5.100h-5zM12 14.700l8-1v6.300h-8zM5.500 21.500h5v5l-5-.6zM12 21.500h8V28l-8-1.200z" fill="#03050a" /></g>) },
  { name: "File Explorer", open: 1, icon: (<g><path d="M2 5h11l2 2h15v20H2z" fill="#fbdc84" /><path d="M2 5h11v3H2z" fill="#efb73e" /><path d="M7 17h18v10.500h-5.500v-5h-7v5H7z" fill="#35a5de" /></g>) },
  { name: "WebStorm", open: 2, icon: (<g><path d="M1 5L14 2l14-1 2 8 1 20-14 2-12-5z" fill="#13b7d8" /><path d="M12 2l16-1-2 7-16 4z" fill="#f4ef5a" /><path d="M5 22l3 7 10 2.500 5-6z" fill="#1b78d0" /><rect x="7" y="7" width="19" height="19" fill="#0c0c0c" /><text x="8" y="17" fontSize="10" fontWeight="800" fill="#fff">WS</text><path d="M9 22.500h7" stroke="#fff" strokeWidth="1.500" /></g>) },
  { name: "Visio", open: 2, icon: (<g><path d="M2 5l16-3v28L2 27z" fill="#3955a3" /><path d="M18 6h12v20H18z" fill="#fff" stroke="#3955a3" /><path d="M20 12h4V9h3v5h-3v6h-4M24 20v3h3" fill="none" stroke="#3955a3" strokeWidth="1.500" /><text x="5" y="21" fontSize="14" fontWeight="700" fill="#fff">V</text></g>) },
  { name: "Skype", open: 1, icon: (<g><circle cx="15" cy="15" r="11.500" fill="#00aff0" /><circle cx="9.500" cy="8.500" r="7" fill="#00aff0" /><circle cx="21" cy="21.500" r="7" fill="#00aff0" /><text x="15" y="22.500" fontSize="21" fontWeight="800" fill="#fff" textAnchor="middle">S</text><circle cx="25.500" cy="25.500" r="6" fill="#faa61a" stroke="#fff" strokeWidth="1.200" /><text x="25.500" y="29.500" fontSize="10" fontWeight="800" fill="#222" textAnchor="middle">1</text></g>) },
  { name: "Notepad++", open: 1, icon: (<g><path d="M4 3h22l1 27H4z" fill="#f4f4f0" stroke="#999" strokeWidth="0.600" /><path d="M6 4.500h18" stroke="#777" strokeWidth="2" strokeDasharray="1.500 1.500" /><path d="M4 20l22-6 1 16H4z" fill="#6dbb38" /><path d="M7 18q4-8 8-3 4-4 7 0 0 6-7 6-6 4-8-3z" fill="#a5e35a" stroke="#1f5a1a" strokeWidth="1.400" /><path d="M13 12q2-4 6-3 3 1 2 4M9 24q6 3 11 0" fill="none" stroke="#1f5a1a" strokeWidth="1.400" /><circle cx="12" cy="17" r="1.500" fill="#1f3b18" /><circle cx="18" cy="17" r="1.500" fill="#1f3b18" /><path d="M31 1L22 26l-1.500 4 .2-5L29 1z" fill="#e58b1c" /></g>) },
  { name: "Photos", open: 2, icon: (<g><rect x="2" y="2" width="28" height="29" fill="#fff" /><rect x="3.500" y="3.500" width="25" height="26" fill="#03050a" /><path d="M3 30V20l8-11 7 10 4-5 7 9v7z" fill="#fff" /></g>) },
  { name: "GitHub Desktop", open: 1, icon: (<g><ellipse cx="16" cy="16" rx="14.500" ry="14.500" fill="#ebe6f2" /><path d="M9 7l4 2.500q3-.8 6 0L23 7q1.500 3 .8 5.500 1.500 2 .8 5-1 4.500-5.600 5.500 1 1.500 1 3v4h-8v-3q-4 .5-5-3 1.500-.5 2.500 1t2.500 1q0-2 1-3-4.600-1-5.600-5.500-.7-3 .8-5Q7.500 10 9 7z" fill="#5b2a86" /></g>) },
  { name: "Chrome", open: 1, active: true, icon: (<g><circle cx="16" cy="16" r="14" fill="#fbc116" /><path d="M16 16L3.900 9A14 14 0 0 1 28.100 9z" fill="#e33b2e" /><path d="M16 16L3.900 9A14 14 0 0 0 14.500 29.900L22 19z" fill="#2ca14b" /><path d="M16 9h12.100A14 14 0 0 1 15.500 30L22 19z" fill="#fbc116" /><circle cx="16" cy="16" r="7" fill="#fff" /><circle cx="16" cy="16" r="5.400" fill="#4a87ee" /></g>) },
  { name: "Snipping Tool", open: 1, icon: (<g><ellipse cx="13" cy="17" rx="11" ry="7" fill="#777" transform="rotate(-12 13 17)" /><ellipse cx="15" cy="9" rx="11" ry="7" fill="#f7f7f7" stroke="#d33" strokeWidth="1.200" transform="rotate(-12 15 9)" /><path d="M11 6L21 22M6 14L24 20" stroke="#c9ced3" strokeWidth="2.200" /><ellipse cx="20" cy="26" rx="2.500" ry="4.500" fill="none" stroke="#2a8bd6" strokeWidth="2.200" transform="rotate(20 20 26)" /><ellipse cx="27" cy="23" rx="2.500" ry="4.500" fill="none" stroke="#2a8bd6" strokeWidth="2.200" transform="rotate(-35 27 23)" /></g>) },
];

function TaskButton({ app }) {
  return (
    <button
      type="button"
      aria-label={app.name}
      className={app.active ? "relative flex w-[62px] items-center justify-center bg-[#35373b]" : "relative flex w-[62px] items-center justify-center"}
    >
      <svg viewBox="0 0 32 32" className="h-[30px] w-[30px]" aria-hidden="true">{app.icon}</svg>
      {app.open && (
        <span className={app.active ? "absolute inset-x-0 bottom-0 flex h-[3px]" : "absolute inset-x-[5px] bottom-0 flex h-[3px]"}>
          <span className="flex-1 bg-[#76b9ed]" />
          {app.open === 2 && <span className="w-[11px] border-l border-[#2f4a60] bg-[#5a8fb9]" />}
        </span>
      )}
    </button>
  );
}

function Taskbar() {
  return (
    <footer className="flex h-[50px] shrink-0 bg-[#02050a] text-white">
      <button type="button" aria-label="Start" className="flex w-[60px] items-center justify-center">
        <svg viewBox="0 0 20 20" className="h-5 w-5" aria-hidden="true">
          <path d="M0 2.800L8.500 1.600V9.500H0zM9.500 1.400L20 0v9.500H9.500zM0 10.500h8.500v7.900L0 17.200zM9.500 10.500H20V20L9.500 18.600z" fill="#fff" />
        </svg>
      </button>
      <label className="flex w-[430px] items-center bg-[#333333] pl-[11px]">
        <span className="h-7 w-7 rounded-full border-[3px] border-white" />
        <input type="text" aria-label="Search" placeholder="Ask me anything" className="ml-1.5 min-w-0 flex-1 bg-transparent text-[17px] outline-none placeholder:text-[#9a9a9a]" />
        <Mic className="mr-4 h-5 w-5 text-[#9a9a9a]" strokeWidth={1.500} aria-hidden="true" />
      </label>
      <nav className="flex pl-px" aria-label="Open applications">
        {apps.map((app) => (
          <TaskButton key={app.name} app={app} />
        ))}
      </nav>
      <div className="ml-auto flex items-center">
        <svg viewBox="0 0 16 10" className="h-[10px] w-4" aria-hidden="true"><path d="M0.500 9L8 1.500 15.500 9" fill="none" stroke="#fff" strokeWidth="1.300" /></svg>
        <svg viewBox="0 0 30 17" className="ml-[22px] h-[17px] w-[30px]" aria-hidden="true">
          <rect x="0.500" y="0.500" width="29" height="16" fill="none" stroke="#fff" />
          <path d="M4 4.500h22M4 8.500h22" stroke="#fff" strokeDasharray="1.500 2" strokeWidth="1.300" />
          <path d="M4 12.500h4M10 12.500h10M22 12.500h4" stroke="#fff" />
        </svg>
        <div className="ml-[21px] w-[62px] text-center text-sm leading-[22px]">
          <div>8:35 PM</div>
          <div>2/1/2017</div>
        </div>
        <button type="button" aria-label="Action center, 21 notifications" className="relative ml-[26px] h-5 w-5">
          <svg viewBox="0 0 20 20" className="h-5 w-5" aria-hidden="true">
            <path d="M0 0h20v16h-8l-4 4v-4H0z" fill="#fff" />
            <path d="M4 4.500h12M4 8.500h12M4 12.500h7" stroke="#02050a" strokeWidth="1.200" />
          </svg>
          <span className="absolute top-2 left-2 flex h-[22px] w-[22px] items-center justify-center rounded-full border border-[#999] bg-[#2b2b2b] text-[13px] text-white">21</span>
        </button>
        <span className="ml-[25px] h-[50px] w-[6px] border-l border-[#666]" />
      </div>
    </footer>
  );
}

export default function App() {
  return (
    <div className={`flex h-screen flex-col overflow-hidden ${ui}`}>
      <header className="shrink-0">
        <TabStrip />
        <Toolbar />
      </header>
      <div className="flex min-h-0 flex-1">
        <Page />
        <VerticalBar />
      </div>
      <HorizontalBar />
      <Taskbar />
    </div>
  );
}
